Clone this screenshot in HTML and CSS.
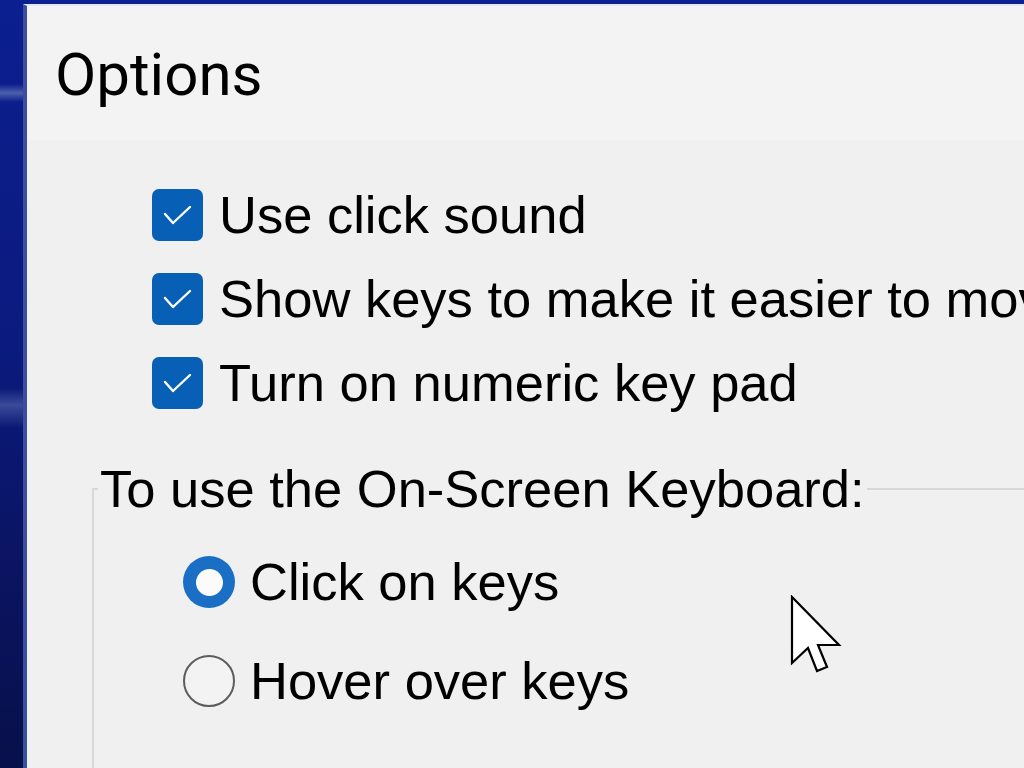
FILE: index.html
```html
<!DOCTYPE html>
<html lang="en">
<head>
<meta charset="utf-8">
<title>Options</title>
<link rel="stylesheet" href="styles.css">
</head>
<body>
<div class="window">
  <header class="title-bar">
    <h1 class="title">Options</h1>
  </header>
  <main class="content">
    <div class="checks">
      <label class="check-row">
        <span class="checkbox"><svg width="51" height="52" viewBox="0 0 51 52"><path d="M13 25 L21 34 L38 18" fill="none" stroke="#fff" stroke-width="2.4" stroke-linecap="round" stroke-linejoin="round"/></svg></span>
        <span class="label">Use click sound</span>
      </label>
      <label class="check-row">
        <span class="checkbox"><svg width="51" height="52" viewBox="0 0 51 52"><path d="M13 25 L21 34 L38 18" fill="none" stroke="#fff" stroke-width="2.4" stroke-linecap="round" stroke-linejoin="round"/></svg></span>
        <span class="label">Show keys to make it easier to move around the screen</span>
      </label>
      <label class="check-row">
        <span class="checkbox"><svg width="51" height="52" viewBox="0 0 51 52"><path d="M13 25 L21 34 L38 18" fill="none" stroke="#fff" stroke-width="2.4" stroke-linecap="round" stroke-linejoin="round"/></svg></span>
        <span class="label">Turn on numeric key pad</span>
      </label>
    </div>
    <fieldset class="group">
      <legend class="group-legend">To use the On-Screen Keyboard:</legend>
      <div class="radios">
        <label class="radio-row">
          <span class="radio radio-on"><span class="radio-dot"></span></span>
          <span class="label">Click on keys</span>
        </label>
        <label class="radio-row">
          <span class="radio"></span>
          <span class="label">Hover over keys</span>
        </label>
      </div>
    </fieldset>
  </main>
</div>
<svg class="cursor" width="54" height="82" viewBox="0 0 54 82"><path d="M2 2 L2 68 L18 53 L27 76 L37 72 L28 50 L49 50 Z" fill="#fff" stroke="#000" stroke-width="2.2" stroke-linejoin="miter"/></svg>
</body>
</html>
```

FILE: styles.css
```css
html, body {
  margin: 0;
  padding: 0;
}

body {
  width: 1024px;
  height: 768px;
  overflow: hidden;
  position: relative;
  background:
    linear-gradient(to bottom, transparent 84px, rgba(130, 150, 200, 0.55) 93px, transparent 102px, transparent 388px, rgba(130, 150, 205, 0.4) 405px, transparent 428px),
    linear-gradient(to bottom, #0c1f90 0%, #0b1a7e 45%, #0a1460 75%, #08104a 100%);
  font-family: "Liberation Sans", Arial, sans-serif;
  color: #000;
}

.window {
  margin: 4px 0 0 23px;
  width: 1100px;
  height: 764px;
  border-left: 4px solid #3c4e9e;
  border-top: 2px solid #dfe6f6;
  background: #f0f0f0;
  box-sizing: border-box;
}

.title-bar {
  background: #f3f3f3;
  height: 134px;
  padding: 34px 0 0 28px;
  box-sizing: border-box;
}

.title {
  margin: 0;
  font-family: Roboto, "Noto Sans", sans-serif;
  font-weight: 400;
  font-size: 60px;
  line-height: 70px;
  color: #000;
}

.content {
  padding: 49px 0 0 0;
}

.checks {
  display: flex;
  flex-direction: column;
  gap: 32px;
  padding-left: 125px;
}

.check-row,
.radio-row {
  display: flex;
  align-items: center;
  height: 52px;
  white-space: nowrap;
}

.check-row {
  gap: 16px;
}

.radio-row {
  gap: 15px;
}

.label {
  font-size: 52.5px;
  line-height: 60px;
}

.checkbox {
  flex: none;
  width: 51px;
  height: 52px;
  border-radius: 7px;
  background: #0860b6;
  display: block;
}

.checkbox svg {
  display: block;
}

.group {
  margin: 50px 0 0 65px;
  padding: 0;
  border: 2px solid #d8d8d8;
  border-right: none;
  border-bottom: none;
  min-width: 0;
  height: 400px;
}

.group-legend {
  margin-left: 4px;
  padding: 0 2px;
  font-size: 52.5px;
  line-height: 60px;
  white-space: nowrap;
}

.radios {
  display: flex;
  flex-direction: column;
  gap: 47px;
  padding: 37px 0 0 89px;
}

.radio {
  flex: none;
  width: 52px;
  height: 52px;
  border-radius: 50%;
  box-sizing: border-box;
  border: 2px solid #5c5c5c;
  background: #f3f3f3;
  display: flex;
  align-items: center;
  justify-content: center;
}

.radio-on {
  border: none;
  background: #1a6ec4;
}

.radio-dot {
  width: 27px;
  height: 27px;
  border-radius: 50%;
  background: #fbfbfb;
}

.cursor {
  position: absolute;
  left: 790px;
  top: 595px;
}
```
